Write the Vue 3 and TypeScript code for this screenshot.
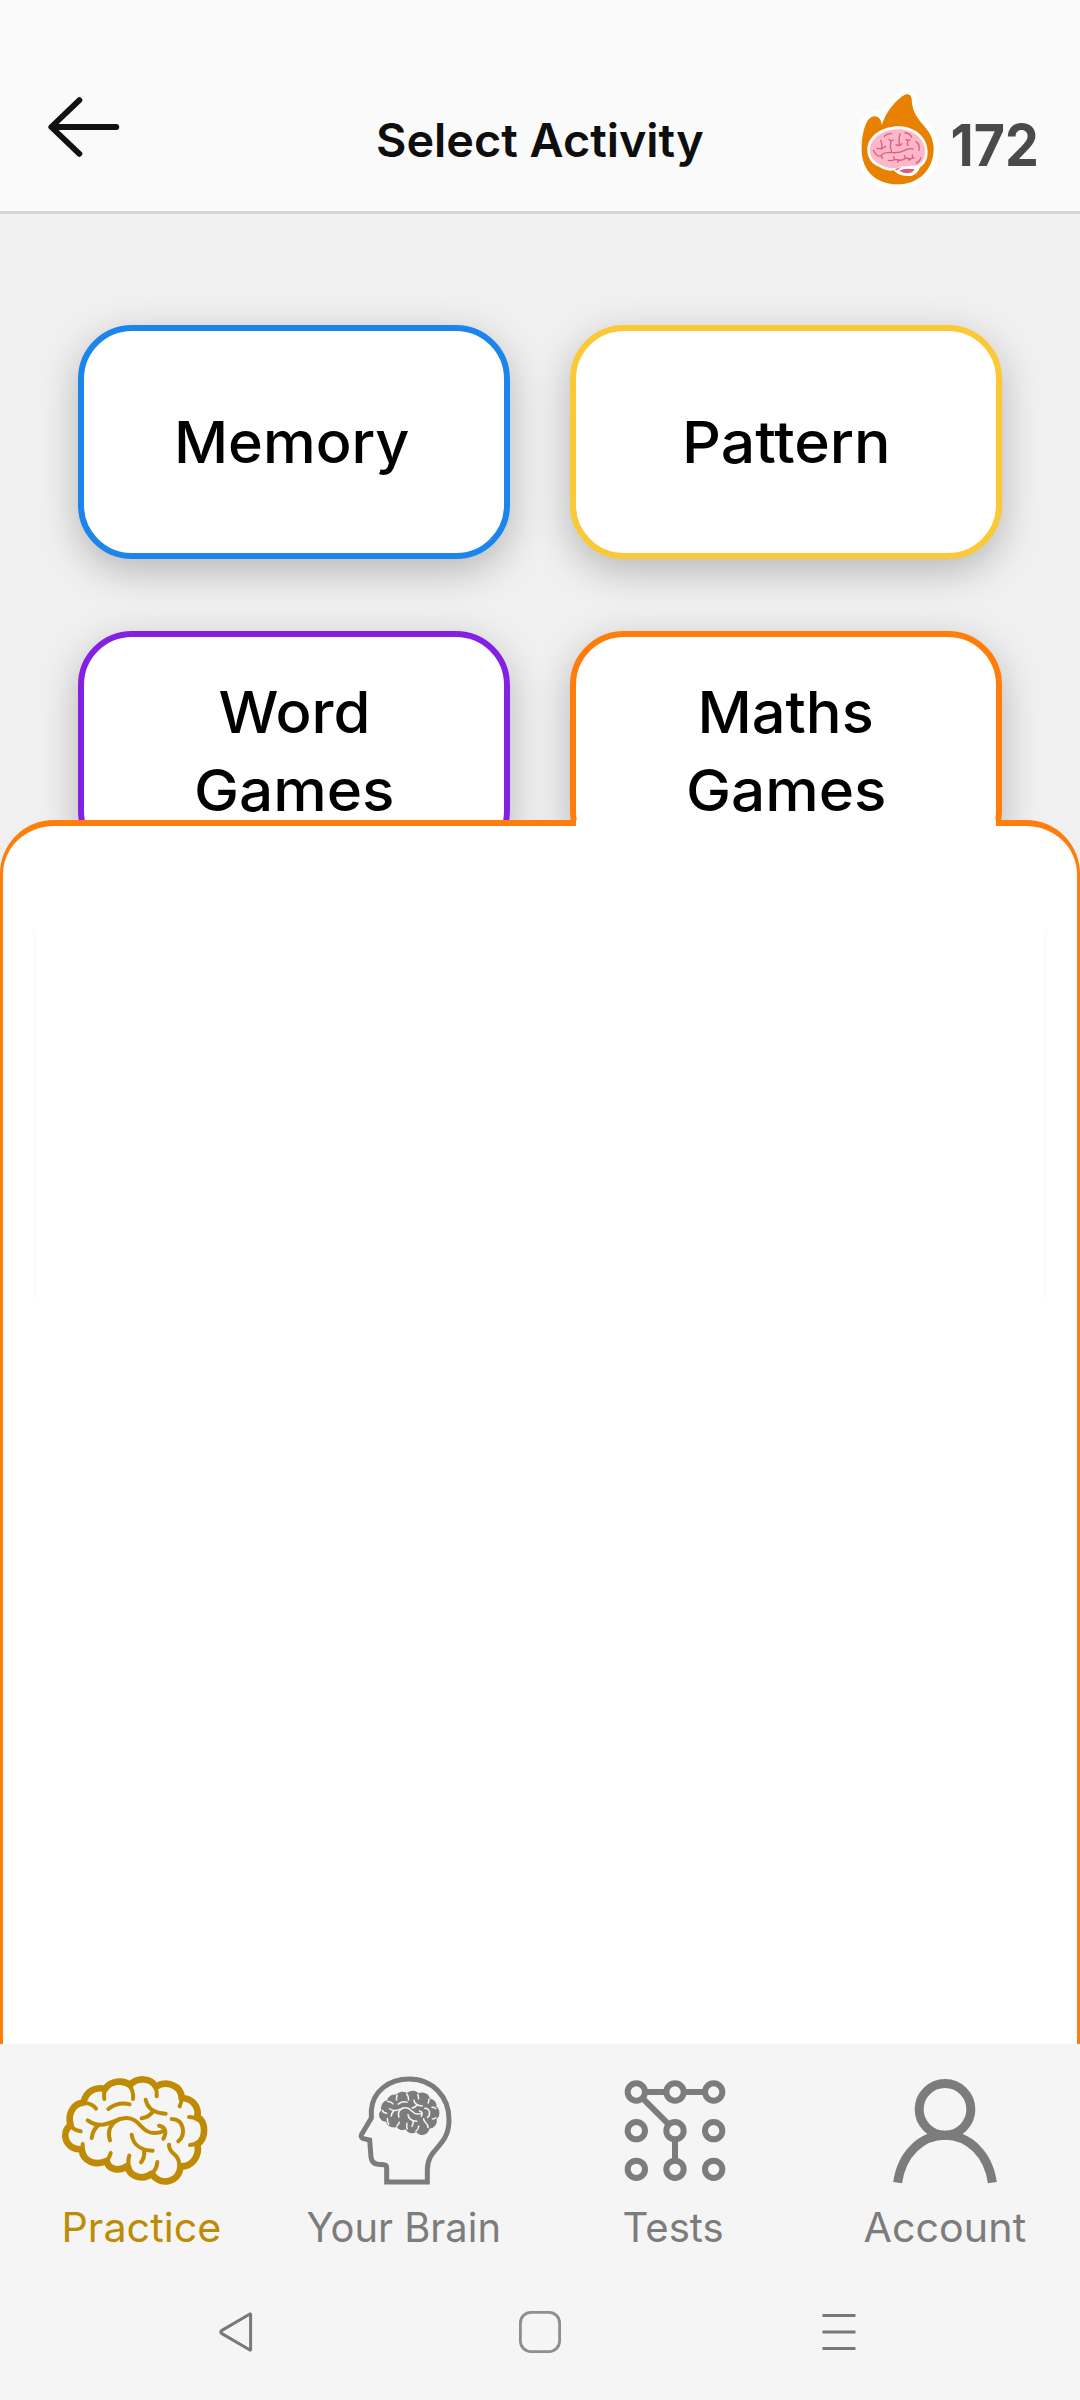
<script setup lang="ts">
interface Activity {
  lines: { text: string; width: number }[]
  color: string
}

const activities: Activity[] = [
  { lines: [{ text: 'Memory', width: 235 }], color: '#1b85eb' },
  { lines: [{ text: 'Pattern', width: 209 }], color: '#fbc936' },
  { lines: [{ text: 'Word', width: 152 }, { text: 'Games', width: 200 }], color: '#8420e2' },
  { lines: [{ text: 'Maths', width: 176 }, { text: 'Games', width: 200 }], color: '#ff7d0a' },
]

const brainOutline =
  'M92 286 C82 256 98 222 130 219 C138 184 168 170 195 178 C212 152 250 150 270 166 C292 142 332 144 348 171 C378 152 424 166 425 205 C456 206 478 230 472 262 C498 276 500 326 472 344 C480 380 456 412 422 410 C418 458 362 472 335 432 C308 454 268 440 262 409 C240 426 206 422 200 394 C170 408 128 398 125 359 C78 362 60 310 92 286 Z'

const brainFolds = [
  'M193 208 Q190 190 198 176',
  'M266 166 Q282 182 279 208',
  'M345 170 Q352 184 350 200',
  'M425 203 Q425 218 419 230',
  'M130 220 Q155 219 168 237',
  'M205 238 Q235 215 269 224',
  'M317 210 Q325 250 377 252',
  'M339 245 Q328 262 305 266',
  'M143 272 C190 306 222 265 260 265 C300 265 304 312 345 310 Q362 310 373 303',
  'M357 288 C377 292 381 308 370 327',
  'M155 325 Q159 300 174 288',
  'M210 332 C200 300 215 280 238 268',
  'M275 315 C280 350 310 362 338 363',
  'M312 362 Q315 385 303 398',
  'M395 268 C435 270 437 316 415 335',
  'M387 345 C385 375 418 368 418 408',
  'M447 262 Q464 262 473 270',
  'M450 346 Q465 345 474 337',
  'M122 305 Q95 300 93 284',
  'M128 343 Q127 370 138 384',
  'M212 370 Q207 388 196 396',
  'M268 378 Q261 400 270 418',
  'M352 397 Q350 422 332 434',
]

const dots = [0, 1, 2].flatMap((r) => [0, 1, 2].map((c) => ({ x: 109 + c * 116, y: 187 + r * 116 })))

// Scales a label horizontally so it occupies its design width.
const vFit = {
  mounted(el: HTMLElement, binding: { value: number }) {
    el.style.transform = `scaleX(${binding.value / el.offsetWidth})`
  },
}
</script>

<template>
  <div class="screen">
    <header class="header">
      <div class="side left">
        <svg class="back" width="72" height="62" viewBox="48 96 72 62">
          <path d="M116.3 127H51.5M79.4 100.2L51.3 127L79.4 153.8" />
        </svg>
      </div>
      <h1 class="title"><span v-fit="328" class="fit">Select Activity</span></h1>
      <div class="side right">
        <svg class="flame" width="86" height="105" viewBox="70 50 258 315">
          <path
            class="flame-body"
            d="M154 165 Q150 138 132 138 C106 138 93 188 93 238 C93 304 140 342 200 342 C262 342 309 300 309 235 C309 165 244 160 243 85 Q240 69 226 72 C205 80 165 122 154 165 Z"
          />
          <path
            fill="#fff"
            d="M110 240 C110 194 158 168 203 168 C252 168 291 200 291 245 C291 265 284 282 267 292 C262 310 246 319 226 317 C208 316 197 309 189 300 C172 303 158 298 148 291 C124 282 110 264 110 240 Z"
          />
          <path
            fill="#fdb7c8"
            d="M118 240 C118 202 160 177 203 177 C248 177 283 205 283 245 C283 268 270 286 252 286 C238 286 225 288 208 289 C192 297 168 294 150 283 C130 275 118 260 118 240 Z"
          />
          <path fill="#dc5f78" d="M206 302 Q220 292 252 297 Q246 309 228 309 Q216 308 206 302 Z M192 298 Q200 292 212 291 Q204 296 198 300 Z" />
          <g fill="none" stroke="#d9607c" stroke-width="4" stroke-linecap="round" stroke-linejoin="round">
            <path d="M161 198 Q170 189 182 190M223 188 Q238 188 243 201M256 214 Q269 222 265 240M257 278 Q268 274 270 262" />
            <path d="M128 240 Q136 258 150 258 Q155 247 175 246 Q205 250 222 240 Q236 233 247 236M150 210 Q156 226 152 236M165 228 L152 236 L139 234M150 258 L156 264" />
            <path d="M175 207 L181 212 L188 209M181 212 Q177 232 183 245M208 190 Q203 205 206 225M196 223 Q206 230 214 220M226 207 L232 211 L238 208M232 211 Q228 220 232 226" />
            <path d="M173 270 Q183 273 192 267 L204 269 Q216 272 225 263 L240 266 L250 262M192 267 L189 259M204 269 L201 276M225 263 L221 256M233 264 L236 270M245 264 L245 254" />
          </g>
        </svg>
        <span class="streak"><span v-fit="88" class="fit">172</span></span>
      </div>
    </header>

    <main class="grid">
      <button
        v-for="(a, i) in activities"
        :key="i"
        class="card"
        :class="{ double: a.lines.length > 1 }"
        :style="{ borderColor: a.color }"
      >
        <span v-for="line in a.lines" :key="line.text" v-fit="line.width" class="fit">{{ line.text }}</span>
      </button>
    </main>

    <section class="panel">
      <div class="notch"></div>
      <div class="list"></div>
    </section>

    <footer class="footer">
      <nav class="tabs">
        <a class="tab active">
          <svg width="150" height="115" viewBox="60 130 450 345" fill="none" stroke="currentColor" stroke-linecap="round" stroke-linejoin="round">
            <path :d="brainOutline" stroke-width="20" />
            <path v-for="d in brainFolds" :key="d" :d="d" stroke-width="12" />
          </svg>
          <span v-fit="160" class="fit">Practice</span>
        </a>
        <a class="tab">
          <svg width="100" height="115" viewBox="165 130 300 345">
            <path
              fill="none"
              stroke="currentColor"
              stroke-width="15"
              d="M260 457 V414 Q260 406 251 405 L234 404 Q215 402 213 382 L209 331 L191 327 Q179 323 186 312 L214 265 V242 C218 186 266 148 328 148 C398 148 447 202 447 270 C447 355 382 352 382 420 V457 Z"
            />
            <g transform="translate(237 183) scale(.42 .414) translate(-68 -141)">
              <path :d="brainOutline" fill="currentColor" stroke="currentColor" stroke-width="14" stroke-linejoin="round" />
              <path v-for="d in brainFolds" :key="d" :d="d" fill="none" stroke="#f5f5f5" stroke-width="11" stroke-linecap="round" />
            </g>
          </svg>
          <span v-fit="194" class="fit">Your Brain</span>
        </a>
        <a class="tab">
          <svg width="104" height="115" viewBox="69 130 312 345" fill="none" stroke="currentColor" stroke-width="18">
            <path d="M135 187H199M251 187H315M128 206L206 284M225 329V393" />
            <circle v-for="d in dots" :key="`${d.x}-${d.y}`" :cx="d.x" :cy="d.y" r="26" />
          </svg>
          <span v-fit="101" class="fit">Tests</span>
        </a>
        <a class="tab">
          <svg width="104" height="115" viewBox="879 130 312 345" fill="none" stroke="currentColor" stroke-width="27">
            <circle cx="1035" cy="239" r="77.5" />
            <path d="M893 459 C905 372 965 317 1035 317 S1165 372 1177 459" />
          </svg>
          <span v-fit="163" class="fit">Account</span>
        </a>
      </nav>
      <div class="system">
        <svg width="36" height="44" viewBox="0 0 36 44" fill="none" stroke="#787878" stroke-width="3" stroke-linejoin="round">
          <path d="M32.6 4.5V39.5Q32.6 40.6 31.5 39.8L3.5 23.4Q2 22 3.5 20.6L31.5 4.2Q32.6 3.4 32.6 4.5Z" />
        </svg>
        <svg width="44" height="44" viewBox="0 0 44 44" fill="none" stroke="#8e8e8e" stroke-width="2.8">
          <rect x="2.4" y="2.4" width="39.2" height="39.2" rx="10.5" />
        </svg>
        <svg width="34" height="44" viewBox="0 0 34 44" stroke="#787878" stroke-width="3">
          <path d="M.5 5.5H33.5M.5 22H33.5M.5 38.5H33.5" />
        </svg>
      </div>
    </footer>
  </div>
</template>

<style>
body {
  margin: 0;
}
</style>

<style scoped>
.screen {
  width: 1080px;
  height: 2400px;
  overflow: hidden;
  display: flex;
  flex-direction: column;
  background: #f0f0f0;
  font-family: Inter, "Liberation Sans", sans-serif;
}
.fit {
  display: inline-block;
  white-space: nowrap;
}
.header {
  box-sizing: border-box;
  height: 214px;
  display: flex;
  align-items: flex-start;
  background: #fafafa;
  border-bottom: 3px solid #d6d6d6;
}
.side {
  width: 340px;
  display: flex;
}
.left {
  padding: 96px 0 0 0;
  box-sizing: border-box;
}
.back {
  margin-left: 48px;
  fill: none;
  stroke: #111;
  stroke-width: 5.8;
  stroke-linecap: round;
  stroke-linejoin: round;
}
.title {
  flex: 1;
  margin: 110px 0 0;
  text-align: center;
  font-size: 46.5px;
  line-height: 60px;
  font-weight: 600;
  color: #0e0e0e;
}
.right {
  box-sizing: border-box;
  justify-content: flex-end;
  align-items: flex-start;
  padding: 87px 41px 0 0;
  gap: 10px;
}
.flame-body {
  fill: #e98100;
  stroke: #fff;
  stroke-width: 35;
  stroke-linejoin: round;
  paint-order: stroke;
}
.streak {
  width: 89px;
  display: flex;
  justify-content: center;
  padding-top: 28px;
  font-size: 58px;
  line-height: 60px;
  font-weight: 700;
  color: #4a4a4a;
}
.grid {
  box-sizing: border-box;
  height: 606px;
  padding: 111px 78px 0;
  display: grid;
  grid-template-columns: 432px 432px;
  grid-auto-rows: 234px;
  gap: 72px 60px;
}
.card {
  box-sizing: border-box;
  padding: 0;
  display: flex;
  flex-direction: column;
  align-items: center;
  justify-content: center;
  background: #fff;
  border: 6px solid;
  border-radius: 54px;
  box-shadow: 0 12px 38px rgba(0, 0, 0, 0.24);
  font-family: inherit;
  font-size: 57.8px;
  line-height: 78px;
  font-weight: 470;
  color: #000;
}
.card:first-child {
  padding-right: 4px;
}
.double {
  padding-top: 6px;
}
.panel {
  position: relative;
  box-sizing: border-box;
  height: 1224px;
  padding: 104px 30px 0;
  background: #fff;
  border: solid #ff7d0a;
  border-width: 6px 3px 0;
  border-radius: 54px 54px 0 0;
}
.notch {
  position: absolute;
  top: -6px;
  left: 573px;
  width: 420px;
  height: 8px;
  background: #fff;
}
.list {
  height: 370px;
  border: solid #fcfcfc;
  border-width: 0 3px;
}
.footer {
  height: 356px;
  background: #f5f5f5;
}
.tabs {
  display: grid;
  grid-template-columns: repeat(4, 1fr);
  padding-top: 29px;
}
.tab {
  display: flex;
  flex-direction: column;
  align-items: center;
  color: #7c7c7c;
  font-size: 40.5px;
  line-height: 60px;
  font-weight: 380;
}
.tab span {
  margin-top: 10px;
  margin-left: -3px;
}
.tab.active {
  color: #bf8b04;
}
.tab.active span {
  margin-left: 12px;
}
.tab:last-child span {
  margin-left: 0;
}
.system {
  margin-top: 52px;
  padding: 0 224px 0 218px;
  display: grid;
  grid-template-columns: 36px 1fr 34px;
  justify-items: center;
}
.system svg:nth-child(2) {
  margin-left: 3px;
}
</style>
